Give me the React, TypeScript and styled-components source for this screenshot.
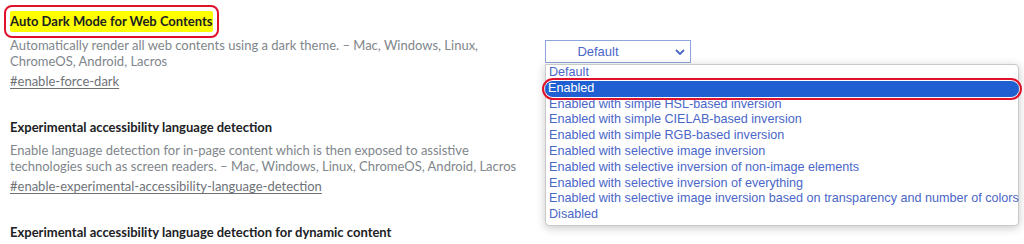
import styled, { createGlobalStyle } from 'styled-components';

const GlobalStyle = createGlobalStyle`
    html, body {
        margin: 0;
        padding: 0;
        background: #ffffff;
    }
    body {
        font-family: Lato, "Open Sans", sans-serif;
        font-size: 13px;
        color: #202124;
        overflow: hidden;
    }
`

const Page = styled.div`
    width: 1024px;
    height: 244px;
    padding: 11px 0 0 10px;
    box-sizing: border-box;
    display: flex;
    flex-direction: column;
    gap: 26px;
`

const Experiment = styled.section`
    display: grid;
    grid-template-columns: 535px auto;
    align-items: start;
`

const Heading = styled.h2<{ $highlight?: boolean }>`
    grid-column: 1 / -1;
    margin: 0;
    font-size: 13px;
    font-weight: 700;
    line-height: 21px;
    color: #202124;

    span {
        display: inline-block;
        background: ${p => p.$highlight ? '#ffff00' : 'transparent'};
        outline: ${p => p.$highlight ? '2.5px solid #e0112b' : 'none'};
        outline-offset: 4px;
        border-radius: ${p => p.$highlight ? '2px' : '0'};
    }
`

const Text = styled.div<{ $gap: number }>`
    margin-top: ${p => p.$gap}px;
    width: 515px;
`

const Description = styled.p`
    margin: 0;
    line-height: 16px;
    color: #80868b;
`

const Permalink = styled.a`
    display: inline-block;
    margin-top: 2px;
    line-height: 20px;
    color: #6e7277;
    text-decoration: underline;
    text-underline-offset: 2px;
`

const Actions = styled.div`
    position: relative;
    margin-top: 8px;
`

const Select = styled.div`
    width: 146px;
    height: 23px;
    box-sizing: border-box;
    border: 1px solid #8fa6dc;
    display: flex;
    align-items: center;
    justify-content: center;
    position: relative;
    font-family: "Liberation Sans", Arial, sans-serif;
    font-size: 13px;
    color: #4a66c8;
    padding-right: 40px;

    svg {
        position: absolute;
        right: 5px;
        top: 8px;
    }
`

const Menu = styled.ul`
    position: absolute;
    top: 24px;
    left: 0;
    width: 474px;
    margin: 0;
    padding: 0 0 2px;
    list-style: none;
    background: #ffffff;
    border: 1px solid #c9c9c9;
    border-radius: 0 4px 4px 4px;
    box-shadow: 0 2px 10px rgba(0, 0, 0, 0.22);
    box-sizing: border-box;
    font-family: "Liberation Sans", Arial, sans-serif;
    font-size: 12.6px;
    z-index: 10;
`

const Option = styled.li<{ $selected?: boolean }>`
    line-height: 15.8px;
    padding-left: 3px;
    white-space: nowrap;
    color: ${p => p.$selected ? '#ffffff' : '#4a66c8'};
    background: ${p => p.$selected ? '#1f5fd1' : 'transparent'};
    outline: ${p => p.$selected ? '2.5px solid #e0112b' : 'none'};
    outline-offset: 1px;
    border-radius: ${p => p.$selected ? '9px' : '0'};
    margin: ${p => p.$selected ? '0 -1px' : '0'};
`

const options = [
    'Default',
    'Enabled',
    'Enabled with simple HSL-based inversion',
    'Enabled with simple CIELAB-based inversion',
    'Enabled with simple RGB-based inversion',
    'Enabled with selective image inversion',
    'Enabled with selective inversion of non-image elements',
    'Enabled with selective inversion of everything',
    'Enabled with selective image inversion based on transparency and number of colors',
    'Disabled',
];

const Chevron = () => (
    <svg width="10" height="6" viewBox="0 0 10 6">
        <path d="M1 1 L5 5 L9 1" fill="none" stroke="#4a66c8" strokeWidth="1.8" />
    </svg>
);

export default function App() {
    return <>
        <GlobalStyle />
        <Page>
            <Experiment>
                <Heading $highlight><span>Auto Dark Mode for Web Contents</span></Heading>
                <Text $gap={5}>
                    <Description>
                        Automatically render all web contents using a dark theme. – Mac, Windows, Linux, ChromeOS, Android, Lacros
                    </Description>
                    <Permalink>#enable-force-dark</Permalink>
                </Text>
                <Actions>
                    <Select>
                        Default
                        <Chevron />
                    </Select>
                    <Menu>
                        {options.map((o, i) => (
                            <Option key={o} $selected={i === 1}>{o}</Option>
                        ))}
                    </Menu>
                </Actions>
            </Experiment>
            <Experiment>
                <Heading>Experimental accessibility language detection</Heading>
                <Text $gap={4}>
                    <Description>
                        Enable language detection for in-page content which is then exposed to assistive technologies such as screen readers. – Mac, Windows, Linux, ChromeOS, Android, Lacros
                    </Description>
                    <Permalink>#enable-experimental-accessibility-language-detection</Permalink>
                </Text>
            </Experiment>
            <Experiment>
                <Heading>Experimental accessibility language detection for dynamic content</Heading>
            </Experiment>
        </Page>
    </>
}
